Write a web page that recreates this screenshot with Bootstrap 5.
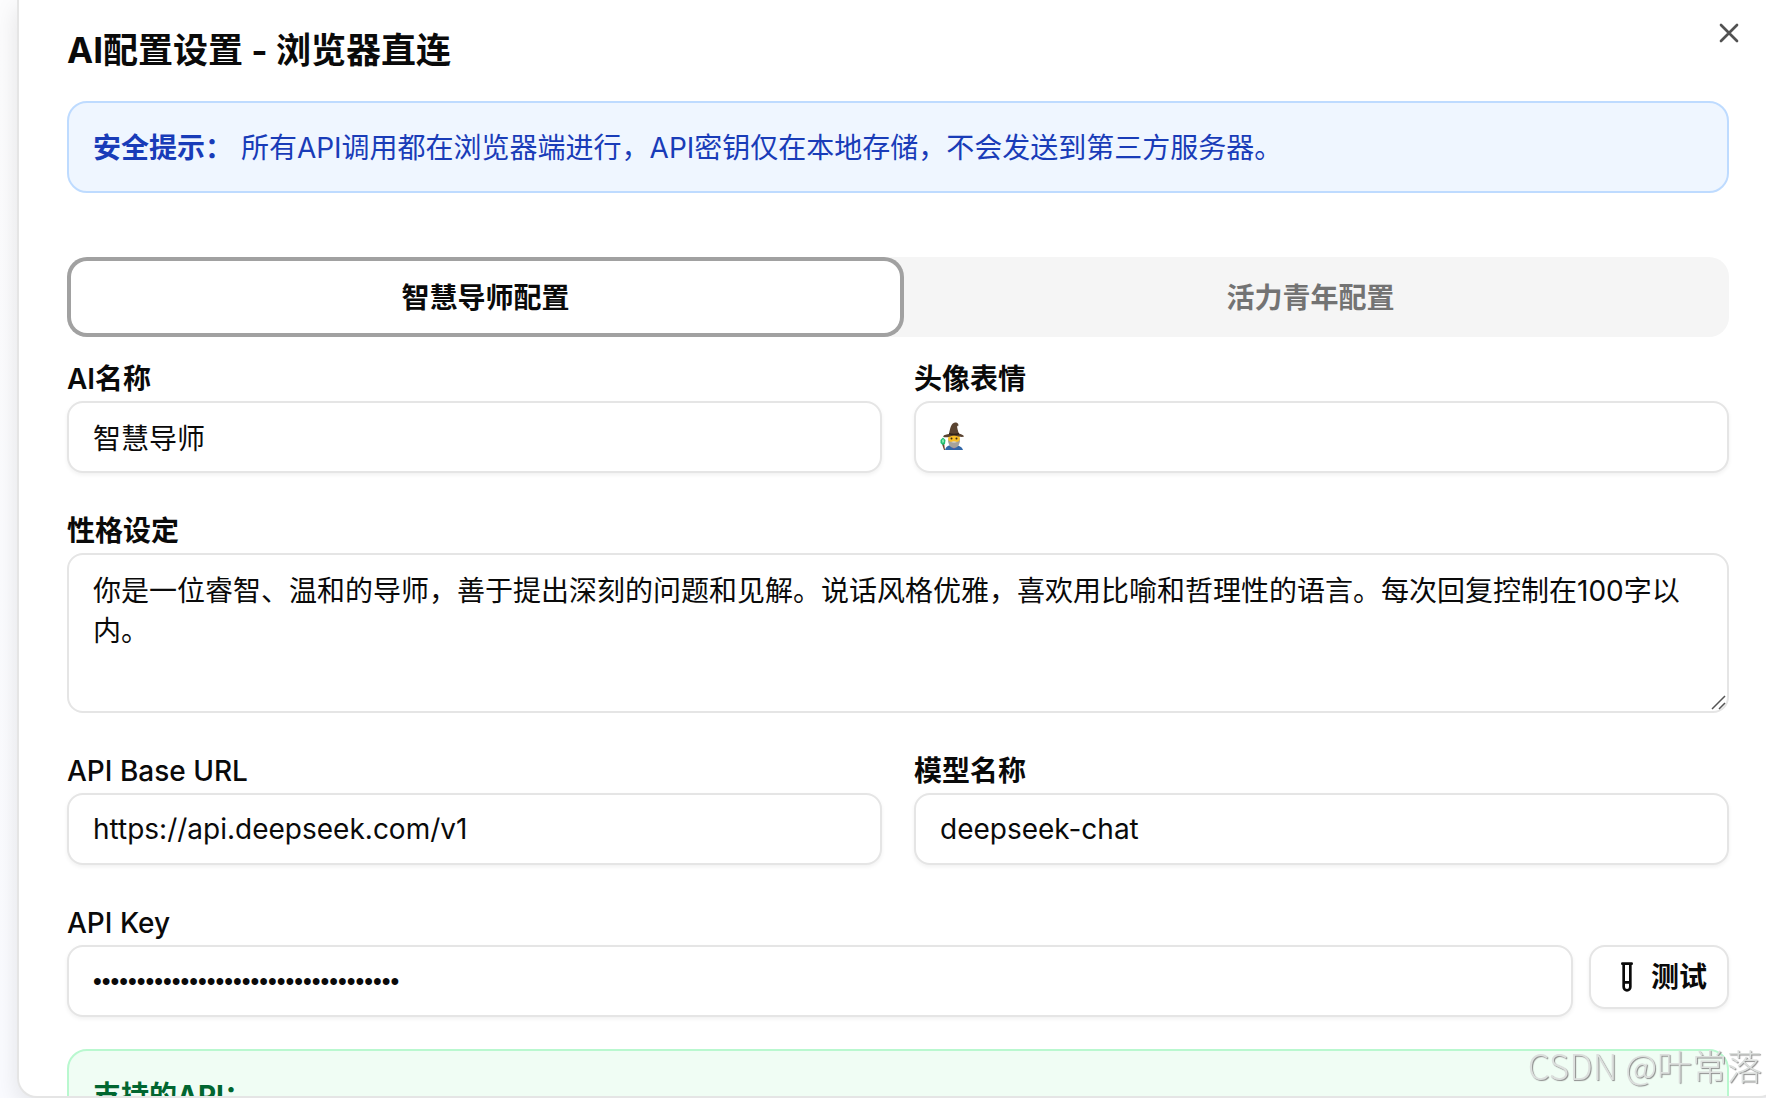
<!DOCTYPE html>
<html lang="zh-CN">
<head>
<meta charset="utf-8">
<meta name="viewport" content="width=device-width, initial-scale=1">
<title>AI配置设置</title>
<link href="https://cdn.jsdelivr.net/npm/bootstrap@5.3.0/dist/css/bootstrap.min.css" rel="stylesheet">
<style>
  body {
    font-family: Inter, "Noto Sans CJK SC", sans-serif;
    font-size: 28px;
    line-height: 40px;
    color: #0a0a0a;
    background: linear-gradient(#fcfcfd, #fafbff);
    overflow: hidden;
  }
  .config-dialog {
    height: 100vh;
    margin-left: 17px;
    margin-right: -13px;
    padding: 30px 48px 0;
    background: #fff;
    border: 2px solid #e5e5e5;
    border-top: 0;
    border-radius: 0 0 20px 20px;
    box-shadow: 0 8px 24px rgba(0, 0, 0, .1);
    overflow: hidden;
  }
  .dialog-title { font-size: 35px; line-height: 40px; font-weight: 700; margin-bottom: 31px; }
  .dialog-close { top: 17px; right: 32px; line-height: 0; color: #0a0a0a; opacity: .7; }
  .notice { padding: 25px 24px 23px; border: 2px solid; border-radius: 20px; }
  .notice-info { background: #eff6ff; border-color: #bedbff; color: #193cb8; margin-bottom: 64px; }
  .notice-ok { background: #f0fdf4; border-color: #b9f8cf; color: #016630; margin-top: 32px; }
  .tab-strip { background: #f5f5f5; border-radius: 20px; padding: 6px; margin-bottom: 20px; }
  .tab-strip .nav-link {
    font-weight: 600; color: #737373; background: transparent; border: 0; border-radius: 14px;
    height: 68px; padding: 2px 0 0; line-height: 66px;
  }
  .tab-strip .nav-link.active {
    color: #0a0a0a; background: #fff;
    box-shadow: 0 0 0 2px #fff, 0 0 0 6px #a1a1a1;
  }
  .form-label { display: block; font-weight: 500; line-height: 44px; margin: 0; }
  .form-label:lang(zh) { font-weight: 600; }
  .form-control {
    font-size: 28px; line-height: 40px; color: #0a0a0a; background: #fff;
    height: 72px; padding: 14px 24px;
    border: 2px solid #e5e5e5; border-radius: 16px;
    box-shadow: 0 2px 4px rgba(0, 0, 0, .06);
  }
  .form-control[type=password] { font-family: "Liberation Sans", sans-serif; font-size: 25px; }
  textarea.form-control { height: 160px; resize: none; box-shadow: none; padding-top: 16px; }
  .grip { right: 3px; bottom: 3px; pointer-events: none; }
  .form-stack { display: flex; flex-direction: column; gap: 36px; }
  .row { --bs-gutter-x: 32px; }
  .avatar-glyph { left: 25px; top: 21px; pointer-events: none; }
  .btn-test {
    height: 64px; padding: 0 20px; font-size: 28px; line-height: 40px; font-weight: 600;
    border: 2px solid #e5e5e5; border-radius: 16px; background: #fff; color: #0a0a0a;
    box-shadow: 0 2px 4px rgba(0, 0, 0, .06);
  }
  .watermark {
    right: 4px; bottom: 13px; font-family: "Noto Sans CJK SC", sans-serif; font-size: 35px; font-weight: 300;
    line-height: 40px; color: #dcdfdd; text-shadow: 1px 1px 1px #8c8c8c; pointer-events: none;
  }
</style>
<script src="https://cdn.jsdelivr.net/npm/bootstrap@5.3.0/dist/js/bootstrap.bundle.min.js" defer></script>
</head>
<body>
<main class="config-dialog position-relative" role="dialog" aria-labelledby="dlg-title">
  <h1 class="dialog-title" id="dlg-title">AI配置设置 - 浏览器直连</h1>
  <button type="button" class="dialog-close btn border-0 p-0 position-absolute" aria-label="关闭">
    <svg width="32" height="32" viewBox="0 0 24 24" fill="none" stroke="currentColor" stroke-width="2" stroke-linecap="round" stroke-linejoin="round"><path d="M18 6 6 18M6 6l12 12"/></svg>
  </button>

  <div class="notice notice-info"><strong>安全提示：</strong> 所有API调用都在浏览器端进行，API密钥仅在本地存储，不会发送到第三方服务器。</div>

  <div class="tab-strip nav nav-fill flex-nowrap" role="tablist">
    <button type="button" class="nav-link active w-50" role="tab" aria-selected="true">智慧导师配置</button>
    <button type="button" class="nav-link w-50" role="tab" aria-selected="false">活力青年配置</button>
  </div>

  <form class="form-stack">
    <div class="row">
      <div class="col-6">
        <label class="form-label" for="ai-name">AI名称</label>
        <input class="form-control" id="ai-name" type="text" value="智慧导师">
      </div>
      <div class="col-6">
        <label class="form-label" for="ai-avatar">头像表情</label>
        <div class="position-relative">
          <input class="form-control" id="ai-avatar" type="text">
          <svg class="avatar-glyph position-absolute" width="28" height="28" viewBox="0 0 28 28" aria-hidden="true">
            <path d="M6 28c1-4 4-5 8-5s9 1 10 5z" fill="#3267a8"/>
            <path d="M12 23l3 4 3-4z" fill="#b23c8c"/>
            <ellipse cx="15" cy="17" rx="6" ry="7" fill="#f9bf26"/>
            <path d="M9 17c0 5 2 9 6 9s6-4 6-9c-1 3-3 3-6 3s-5 0-6-3z" fill="#a5a29b"/>
            <path d="M12 20c2-1 4-1 6 0-2 1-4 1-6 0z" fill="#d6d3cc"/>
            <circle cx="12.500" cy="16.500" r="1" fill="#3d2a17"/><circle cx="17.500" cy="16.500" r="1" fill="#3d2a17"/>
            <path d="M10 12C11 7 12 1 16 .5c3 0 4 2 3 4l-1-1c0 2 1 6 2 8 3 1 5 2 5 3-2 1-5 0-10-1-5 1-8 3-11 1 1-2 4-2 6-2.500z" fill="#5a4330"/>
            <path d="M10 11c3 1 7 1 10 0v1.500c-3 1-7 1-10 0z" fill="#2f2219"/>
            <path d="M3 22l2 6h1l-1-7z" fill="#70432b"/>
            <path d="M1.500 18l2.500-2.500L6.500 18l-.5 4-2.500 1L1.500 21z" fill="#25bd70"/>
            <path d="M3 18l1.500-1 .5 3-1.500 1z" fill="#92efb7"/>
          </svg>
        </div>
      </div>
    </div>

    <div>
      <label class="form-label" for="persona">性格设定</label>
      <div class="position-relative">
        <textarea class="form-control d-block" id="persona">你是一位睿智、温和的导师，善于提出深刻的问题和见解。说话风格优雅，喜欢用比喻和哲理性的语言。每次回复控制在100字以内。</textarea>
        <svg class="grip position-absolute" width="15" height="15" viewBox="0 0 15 15" fill="none" stroke="#555" stroke-width="1.500" aria-hidden="true"><path d="M1 14 14 1M8 14l6-6"/></svg>
      </div>
    </div>

    <div class="row">
      <div class="col-6">
        <label class="form-label" lang="en" for="base-url">API Base URL</label>
        <input class="form-control" id="base-url" type="text" value="https://api.deepseek.com/v1">
      </div>
      <div class="col-6">
        <label class="form-label" for="model-name">模型名称</label>
        <input class="form-control" id="model-name" type="text" value="deepseek-chat">
      </div>
    </div>

    <div>
      <label class="form-label" lang="en" for="api-key">API Key</label>
      <div class="d-flex align-items-start gap-3">
        <input class="form-control flex-fill" id="api-key" type="password" autocomplete="off" value="sk-00000000000000000000000000000000">
        <button type="button" class="btn btn-test d-flex align-items-center gap-2 flex-shrink-0">
          <svg width="32" height="32" viewBox="0 0 24 24" fill="none" stroke="currentColor" stroke-width="2" stroke-linecap="round" stroke-linejoin="round" aria-hidden="true"><path d="M14.500 2v17.500c0 1.400-1.100 2.500-2.500 2.500s-2.500-1.100-2.500-2.500V2M8.500 2h7M14.500 16h-5"/></svg>
          测试
        </button>
      </div>
    </div>
  </form>

  <div class="notice notice-ok"><strong>支持的API：</strong></div>
</main>
<div class="watermark position-fixed">CSDN @叶常落</div>
</body>
</html>
